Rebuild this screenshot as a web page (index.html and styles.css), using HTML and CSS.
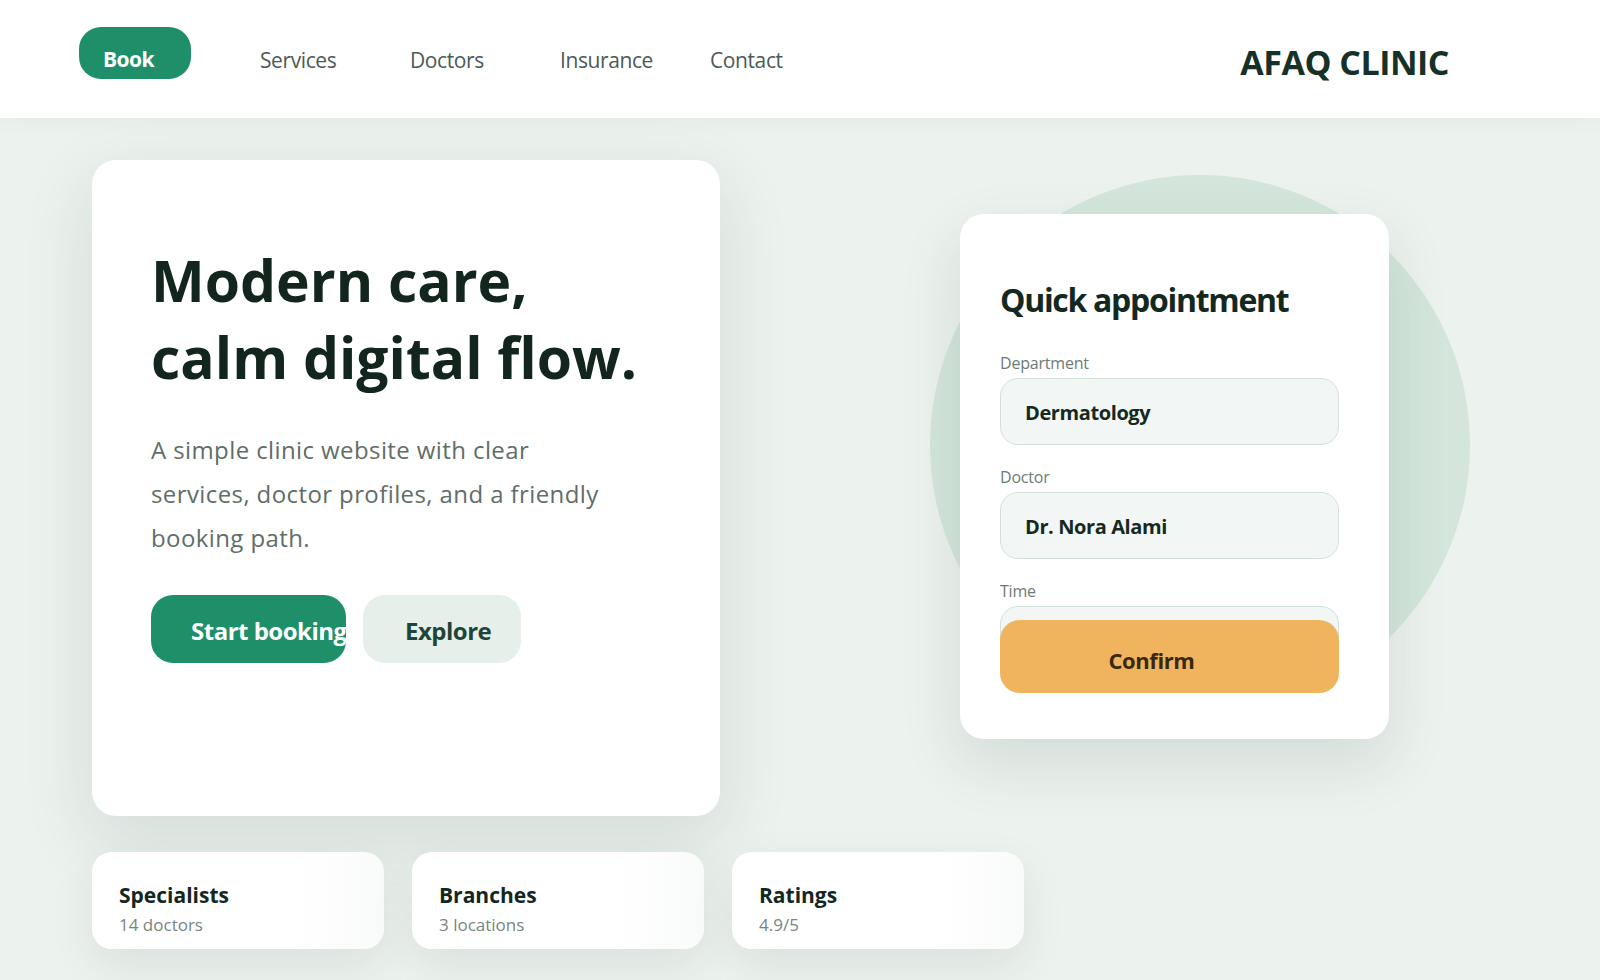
FILE: index.html
```html
<!DOCTYPE html>
<html lang="en">
<head>
    <meta charset="UTF-8">
    <meta name="viewport" content="width=device-width, initial-scale=1.0">
    <title>Afaq Clinic</title>
    <link rel="stylesheet" href="styles.css">
</head>
<body>

    <header class="topbar">
        <a href="#" class="book-btn">Book</a>
        <nav class="nav">
            <a href="#">Services</a>
            <a href="#">Doctors</a>
            <a href="#">Insurance</a>
            <a href="#">Contact</a>
        </nav>
        <div class="brand">AFAQ CLINIC</div>
    </header>

    <main class="page">
        <section class="hero">
            <div class="hero-card">
                <h1>Modern care,<br>calm digital flow.</h1>
                <p class="lead">A simple clinic website with clear services, doctor profiles, and a friendly booking path.</p>
                <div class="actions">
                    <a href="#" class="btn btn-primary">Start booking</a>
                    <a href="#" class="btn btn-soft">Explore</a>
                </div>
            </div>

            <aside class="side">
                <div class="blob"></div>
                <form class="quick-card" onsubmit="return false">
                    <h2>Quick appointment</h2>
                    <div class="field">
                        <label>Department</label>
                        <div class="input">Dermatology</div>
                    </div>
                    <div class="field">
                        <label>Doctor</label>
                        <div class="input">Dr. Nora Alami</div>
                    </div>
                    <div class="field">
                        <label>Time</label>
                        <div class="input"></div>
                    </div>
                    <button class="confirm">Confirm</button>
                </form>
            </aside>
        </section>

        <section class="stats">
            <div class="stat">
                <h3>Specialists</h3>
                <p>14 doctors</p>
            </div>
            <div class="stat">
                <h3>Branches</h3>
                <p>3 locations</p>
            </div>
            <div class="stat">
                <h3>Ratings</h3>
                <p>4.9/5</p>
            </div>
        </section>
    </main>

</body>
</html>
```

FILE: styles.css
```css
body {
    font-family: 'Open Sans', 'Noto Sans', sans-serif;
    margin: 0;
    padding: 0;
    background: #ecf2ee;
    color: #13271f;
}
a {
    text-decoration: none;
}
.page {
    padding-bottom: 60px;
}

/* top bar */
.topbar {
    height: 118px;
    box-sizing: border-box;
    background: #fff;
    display: flex;
    align-items: flex-start;
    padding: 27px 151px 0 79px;
    box-shadow: 0 6px 20px rgba(30, 60, 50, 0.03);
}
.book-btn {
    width: 112px;
    height: 52px;
    box-sizing: border-box;
    padding: 12px 0 0 24px;
    border-radius: 22px;
    background: #1f8f6a;
    color: #fff;
    font-size: 21px;
    font-weight: 700;
    line-height: 40px;
    letter-spacing: -0.5px;
}
.nav {
    display: flex;
    margin-left: 69px;
    padding-top: 18px;
}
.nav a {
    width: 150px;
    font-size: 21px;
    line-height: 30px;
    color: #4b5a55;
    letter-spacing: -0.4px;
}
.brand {
    margin-left: auto;
    padding-top: 13px;
    font-size: 34px;
    font-weight: 700;
    line-height: 44px;
    color: #163127;
    letter-spacing: -0.5px;
}

/* hero */
.hero {
    display: flex;
    padding: 42px 0 0 92px;
}
.hero-card {
    width: 628px;
    height: 656px;
    box-sizing: border-box;
    padding: 82px 0 0 59px;
    background: #fff;
    border-radius: 24px;
    box-shadow: 0 24px 70px rgba(40, 70, 60, 0.13);
}
.hero-card h1 {
    margin: 0;
    font-size: 57px;
    line-height: 77px;
    font-weight: 700;
    color: #12261e;
}
.lead {
    margin: 32px 0 0;
    width: 462px;
    font-size: 24px;
    line-height: 44px;
    letter-spacing: 0.4px;
    color: #5f6e69;
}
.actions {
    display: flex;
    gap: 17px;
    margin-top: 35px;
}
.btn {
    height: 68px;
    box-sizing: border-box;
    padding-top: 4px;
    border-radius: 22px;
    font-size: 24px;
    font-weight: 700;
    line-height: 64px;
    white-space: nowrap;
    overflow: hidden;
    letter-spacing: -0.5px;
}
.btn-primary {
    width: 195px;
    padding-left: 40px;
    background: #1f8f6a;
    color: #fff;
}
.btn-soft {
    width: 158px;
    padding-left: 42px;
    background: #e6efea;
    color: #1f4538;
}

/* quick appointment */
.side {
    position: relative;
    margin-left: 240px;
    padding-top: 54px;
}
.blob {
    position: absolute;
    left: -30px;
    top: 15px;
    width: 540px;
    height: 540px;
    border-radius: 50%;
    background: #d4e6db;
}
.quick-card {
    position: relative;
    width: 429px;
    box-sizing: border-box;
    padding: 66px 50px 46px 40px;
    background: #fff;
    border-radius: 24px;
    box-shadow: 0 24px 60px rgba(40, 70, 60, 0.13);
}
.quick-card h2 {
    margin: 0 0 33px;
    font-size: 32px;
    line-height: 40px;
    font-weight: 700;
    letter-spacing: -1.3px;
    color: #13291f;
}
.field {
    margin-bottom: 22px;
}
.field label {
    display: block;
    margin-bottom: 5px;
    font-size: 16px;
    line-height: 20px;
    color: #6d7b76;
    letter-spacing: -0.2px;
}
.input {
    height: 67px;
    box-sizing: border-box;
    padding: 2px 24px 0;
    border: 1px solid #d3e1da;
    border-radius: 18px;
    background: #f2f7f5;
    font-size: 20px;
    font-weight: 700;
    line-height: 63px;
    color: #16291f;
    letter-spacing: -0.4px;
}
.field:last-of-type {
    margin-bottom: 0;
}
/* button sits over the lower part of the time field */
.confirm {
    position: relative;
    display: block;
    width: 100%;
    height: 73px;
    margin-top: -53px;
    padding: 6px 36px 0 0;
    border: none;
    border-radius: 20px;
    background: #f0b45e;
    color: #3a2810;
    font-family: inherit;
    font-size: 22px;
    font-weight: 700;
    letter-spacing: -0.4px;
    cursor: pointer;
}

/* stats row */
.stats {
    display: flex;
    gap: 28px;
    padding: 36px 0 0 92px;
}
.stat {
    width: 292px;
    height: 97px;
    box-sizing: border-box;
    padding: 30px 0 0 27px;
    background: linear-gradient(to right, #fff 70%, #f9fbfa);
    border-radius: 20px;
    box-shadow: 0 16px 44px rgba(40, 70, 60, 0.09);
}
.stat h3 {
    margin: 0;
    font-size: 21px;
    line-height: 26px;
    font-weight: 700;
    color: #13271f;
}
.stat p {
    margin: 6px 0 0;
    font-size: 17px;
    line-height: 22px;
    color: #77857f;
}
```
